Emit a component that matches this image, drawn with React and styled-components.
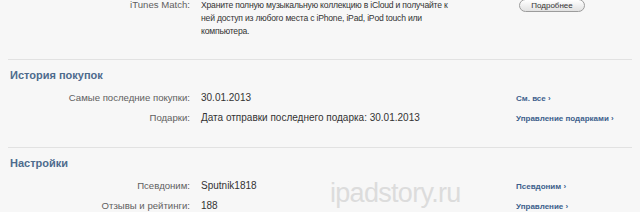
import React from "react";
import styled, { createGlobalStyle } from "styled-components";

const Global = createGlobalStyle`
  html, body {
    margin: 0;
    padding: 0;
    background: #f7f7f7;
  }
  body {
    font-family: "Liberation Sans", Arial, sans-serif;
    -webkit-font-smoothing: antialiased;
  }
`;

const Page = styled.div`
  width: 640px;
  height: 212px;
  overflow: hidden;
  position: relative;
  background: #f7f7f7;
`;

const Section = styled.section`
  margin: 0 8px;
  padding: ${(p) => (p.$top ? "0 0 21px" : "8px 0 22px")};
  margin-top: ${(p) => (p.$top ? "-2px" : "0")};
  border-bottom: 1px solid #e2e2e2;
`;

const Heading = styled.h2`
  margin: 0 0 9px 2px;
  font-size: 11px;
  line-height: 14px;
  font-weight: bold;
  color: #4e6b8d;
`;

const Rows = styled.div`
  display: grid;
  grid-template-columns: 182px 1fr 116px;
  column-gap: 11px;
  row-gap: 6px;
  align-items: baseline;
`;

const Label = styled.div`
  text-align: right;
  font-size: 9.6px;
  line-height: 13px;
  color: #606060;
`;

const Value = styled.div`
  font-size: ${(p) => (p.$small ? "8.6px" : "10px")};
  letter-spacing: ${(p) => (p.$small ? "-0.2px" : "0")};
  line-height: 13px;
  color: #333;
`;

const Link = styled.a`
  font-size: 8px;
  line-height: 13px;
  font-weight: bold;
  color: #3d5f8c;
  text-decoration: none;
  white-space: nowrap;
`;

const Button = styled.button`
  justify-self: start;
  align-self: start;
  margin-left: 3px;
  margin-top: 1px;
  width: 66px;
  height: 13px;
  padding: 0;
  border: 1px solid #9c9c9c;
  border-radius: 7px;
  background: linear-gradient(#ffffff, #e2e2e2);
  font-family: "Liberation Sans", Arial, sans-serif;
  font-size: 8px;
  line-height: 11px;
  color: #333;
`;

const Watermark = styled.div`
  position: absolute;
  left: 330px;
  top: 178px;
  font-size: 27px;
  letter-spacing: -0.7px;
  color: #dcdcdc;
  pointer-events: none;
`;

const Arrow = () => <span>&nbsp;&rsaquo;</span>;

export default function App() {
  return (
    <>
      <Global />
      <Page>
        <Section $top>
          <Rows>
            <Label>iTunes Match:</Label>
            <Value $small>
              Храните полную музыкальную коллекцию в iCloud и получайте к
              <br />
              ней доступ из любого места с iPhone, iPad, iPod touch или
              <br />
              компьютера.
            </Value>
            <Button>Подробнее</Button>
          </Rows>
        </Section>

        <Section>
          <Heading>История покупок</Heading>
          <Rows>
            <Label>Самые последние покупки:</Label>
            <Value>30.01.2013</Value>
            <Link>См. все<Arrow /></Link>
            <Label>Подарки:</Label>
            <Value>Дата отправки последнего подарка: 30.01.2013</Value>
            <Link>Управление подарками<Arrow /></Link>
          </Rows>
        </Section>

        <Section>
          <Heading>Настройки</Heading>
          <Rows>
            <Label>Псевдоним:</Label>
            <Value>Sputnik1818</Value>
            <Link>Псевдоним<Arrow /></Link>
            <Label>Отзывы и рейтинги:</Label>
            <Value>188</Value>
            <Link>Управление<Arrow /></Link>
          </Rows>
        </Section>

        <Watermark>ipadstory.ru</Watermark>
      </Page>
    </>
  );
}
